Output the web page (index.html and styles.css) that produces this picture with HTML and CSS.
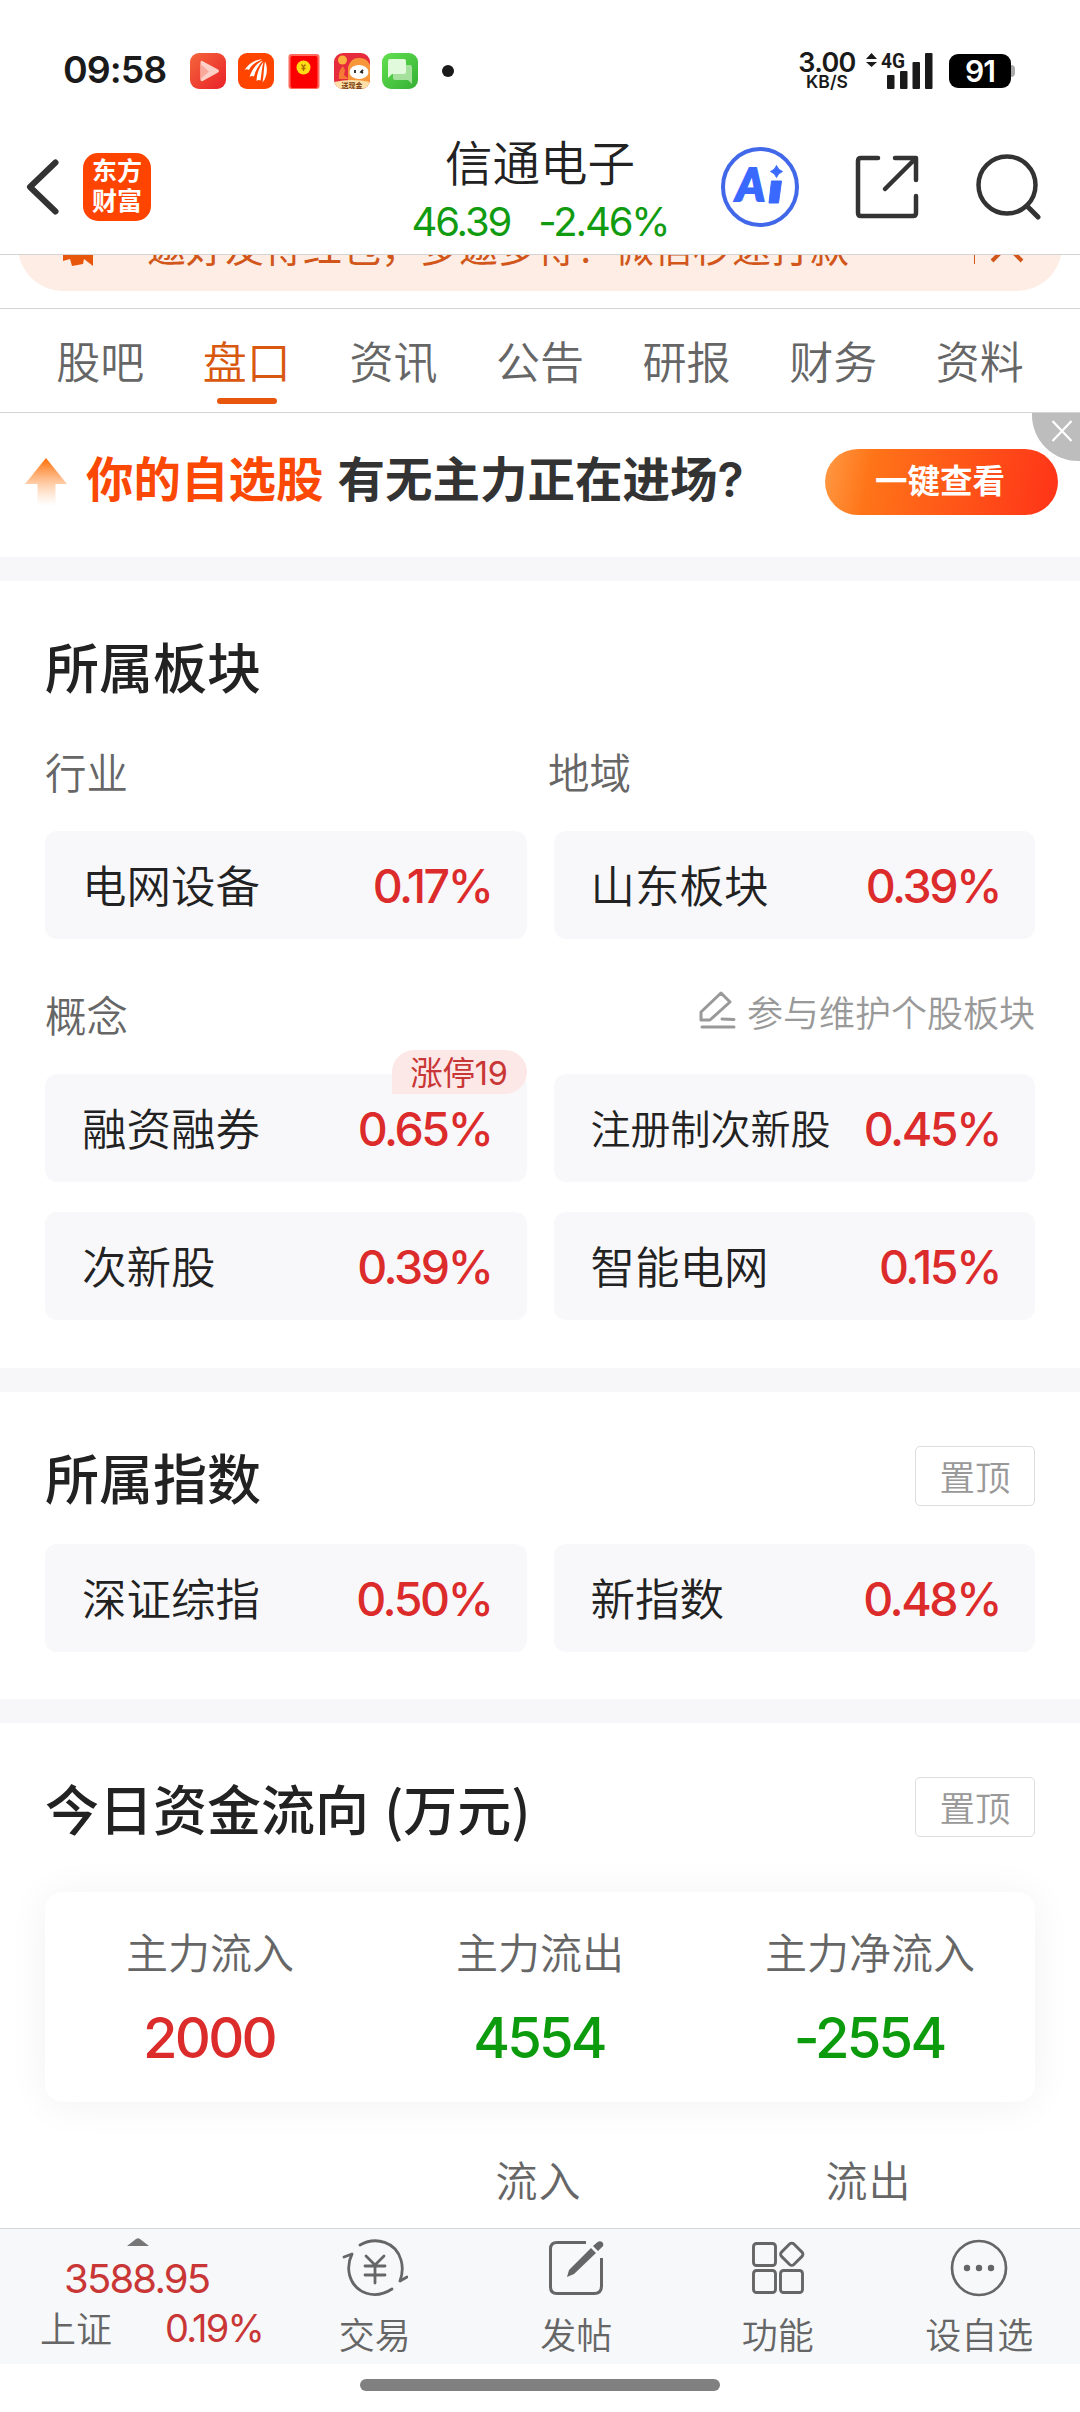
FILE: index.html
```html
<!DOCTYPE html>
<html lang="zh-CN">
<head>
    <meta charset="UTF-8">
    <meta name="viewport" content="width=device-width, initial-scale=1.0">
    <title>信通电子</title>
    <link rel="stylesheet" href="styles.css">
</head>
<body>
<div class="page">
    <!-- Status bar -->
    <div class="status-bar">
        <span class="time">09:58</span>
        <div class="app-icons">
            <svg width="36" height="36" viewBox="0 0 36 36">
                <defs>
                    <linearGradient id="gPlay" x1="0" y1="0" x2="1" y2="1"><stop offset="0" stop-color="#f4673a"/><stop offset="1" stop-color="#e9202a"/></linearGradient>
                </defs>
                <rect width="36" height="36" rx="9" fill="url(#gPlay)"/>
                <path d="M10.500 9.500Q10.500 7 12.700 8.200L28 16.500Q30 18 28 19.500L12.700 28Q10.500 29 10.500 26.500Z" fill="#ffd0c8"/>
                <path d="M10.500 11V26L19 18.500Z" fill="#f9a99c"/>
            </svg>
            <svg width="36" height="36" viewBox="0 0 36 36">
                <rect width="36" height="36" rx="9" fill="#ff4400"/>
                <path d="M6.500 17C11 10 17 6.500 24 6.500C18 9 13 12 11 17Q9 15.500 6.500 17ZM11.500 24C13.500 17 18 10.500 25 7.500C20.500 12 17.500 17.500 16 23.500Q13.500 22.500 11.500 24ZM18.500 28C19 20 21.500 13.500 25.500 9C24 14 23.500 21 22.500 27.500Q20.500 26.500 18.500 28ZM24.500 29.500C26 22 25.500 15 27 8.500C30 14 29.500 24 24.500 29.500Z" fill="#fff"/>
            </svg>
            <svg width="36" height="36" viewBox="0 0 36 36">
                <rect x="2.500" y="1" width="31" height="35" rx="3" fill="#ff6a5c"/>
                <rect x="4.500" y="3" width="27" height="32" rx="2" fill="#fb0000"/>
                <circle cx="17.500" cy="14.500" r="7" fill="#ffdc14"/>
                <path d="M15.500 11.500L17.500 14L19.500 11.500M17.500 14V18M15.500 15.500H19.500" stroke="#a86a00" stroke-width="1.300" fill="none"/>
            </svg>
            <svg width="36" height="36" viewBox="0 0 36 36">
                <defs><clipPath id="cFox"><rect width="36" height="36" rx="9"/></clipPath></defs>
                <g clip-path="url(#cFox)">
                    <rect width="36" height="36" fill="#e62b3c"/>
                    <path d="M14 36V14Q17 4 26 5Q33 5 36 12V36Z" fill="#f8973a"/>
                    <circle cx="8.500" cy="7" r="4.500" fill="#fbb040"/>
                    <path d="M5 26Q4 18 9 13L11 17L10 22L15 26Z" fill="#f47a35"/>
                    <ellipse cx="25" cy="19" rx="9.500" ry="7" fill="#fff"/>
                    <path d="M21 17V20M29 17L27 19L29 20" stroke="#222" stroke-width="1.800" fill="none"/>
                    <path d="M0 29Q18 25 36 29V36H0Z" fill="#fde0a8"/>
                </g>
                <text x="18" y="34.500" text-anchor="middle" class="fox-text">送现金</text>
            </svg>
            <svg width="36" height="36" viewBox="0 0 36 36">
                <defs>
                    <linearGradient id="gMsg" x1="0" y1="0" x2="1" y2="1"><stop offset="0" stop-color="#62e04f"/><stop offset="1" stop-color="#35b035"/></linearGradient>
                </defs>
                <rect width="36" height="36" rx="9" fill="url(#gMsg)"/>
                <path d="M13 12H28Q30 12 30 14V31L26 27H13Q11 27 11 25V14Q11 12 13 12Z" fill="#a5e09d"/>
                <path d="M8 6H22Q24 6 24 8V19Q24 21 22 21H10L6 25V8Q6 6 8 6Z" fill="#e0fadb"/>
            </svg>
        </div>
        <span class="more-dot"></span>
        <div class="net-speed"><b>3.00</b><span>KB/S</span></div>
        <svg class="signal" width="68" height="38" viewBox="0 0 68 38">
            <path d="M0 7L5.500 1L11 7ZM0 10H11L5.500 15Z" fill="#1a1a1a"/>
            <text x="15" y="16" class="signal-text" textLength="24" lengthAdjust="spacingAndGlyphs">4G</text>
            <g fill="#1a1a1a">
                <rect x="21" y="23" width="7.500" height="14" rx="1"/>
                <rect x="34" y="19" width="7.500" height="18" rx="1"/>
                <rect x="46.500" y="10" width="7.500" height="27" rx="1"/>
                <rect x="59" y="1" width="7.500" height="36" rx="1"/>
            </g>
        </svg>
        <span class="battery">91</span><span class="battery-tip"></span>
    </div>

    <!-- Header -->
    <div class="header">
        <div class="header-left">
            <svg width="36" height="60" viewBox="0 0 36 60"><path d="M30.500 5.500L5 30L30.500 54.500" fill="none" stroke="#333" stroke-width="6" stroke-linecap="round" stroke-linejoin="round"/></svg>
            <div class="logo">东方<br>财富</div>
        </div>
        <div class="stock">
            <div class="stock-name">信通电子</div>
            <div class="stock-price"><span>46.39</span><span>-2.46%</span></div>
        </div>
        <div class="header-right">
            <svg width="78" height="80" viewBox="0 0 78 80">
                <ellipse cx="39" cy="40" rx="37" ry="38" fill="none" stroke="#4068e8" stroke-width="4"/>
                <text x="15" y="54" class="ai-text" textLength="29" lengthAdjust="spacingAndGlyphs">A</text>
                <path d="M50.500 34H60.500L57.500 56H48Z" fill="#3a69ff" stroke="#3a69ff" stroke-linejoin="round"/>
                <path d="M55.500 18.500Q57 23 61.500 24.500Q57 26 55.500 30.500Q54 26 49.500 24.500Q54 23 55.500 18.500Z" fill="#3a69ff" stroke="#3a69ff"/>
            </svg>
            <svg width="64" height="64" viewBox="0 0 64 64"><path d="M23 3H6Q3 3 3 6V58Q3 61 6 61H58Q61 61 61 58V41M40 3H61V25M60 4L30 34" fill="none" stroke="#333" stroke-width="4.500" stroke-linecap="round" stroke-linejoin="round"/></svg>
            <svg width="66" height="68" viewBox="0 0 66 68"><circle cx="32" cy="32" r="28.500" fill="none" stroke="#333" stroke-width="4.500"/><path d="M52 53L63 64" stroke="#333" stroke-width="5" stroke-linecap="round"/></svg>
        </div>
    </div>

    <!-- Notice strip, half scrolled under the header -->
    <div class="notice-wrap">
        <div class="notice">
            <svg width="32" height="40" viewBox="0 0 32 40"><path d="M1 12L31 2V40L22 33L21 38L10 40L8 33L1 35Z" fill="#e8560b"/></svg>
            <span class="notice-text">邀好友得红包，多邀多得！微信秒速打款</span>
            <span class="notice-line"></span>
            <svg width="34" height="34" viewBox="0 0 34 34"><path d="M2 2L32 32M32 2L2 32" stroke="#d2561a" stroke-width="4"/></svg>
        </div>
    </div>

    <!-- Tabs -->
    <div class="tabs">
        <div class="tab">股吧</div>
        <div class="tab active">盘口</div>
        <div class="tab">资讯</div>
        <div class="tab">公告</div>
        <div class="tab">研报</div>
        <div class="tab">财务</div>
        <div class="tab">资料</div>
    </div>

    <!-- Ad -->
    <div class="ad">
        <svg width="42" height="48" viewBox="0 0 42 48">
            <defs><linearGradient id="gUp" x1="0" y1="0" x2="0" y2="1"><stop offset="0" stop-color="#ff6a00"/><stop offset="1" stop-color="#ffb57a" stop-opacity="0"/></linearGradient></defs>
            <path d="M21 0L42 26H30.500V48H12.500V26H0Z" fill="url(#gUp)"/>
        </svg>
        <span class="ad-hot">你的自选股</span>
        <span class="ad-text">有无主力正在进场<b>?</b></span>
        <button class="ad-btn">一键查看</button>
        <div class="ad-close">
            <svg width="22" height="22" viewBox="0 0 22 22"><path d="M1.500 1L20.500 21M20.500 1L1.500 21" stroke="#fff" stroke-width="2.200"/></svg>
        </div>
    </div>

    <!-- Sectors -->
    <div class="section sectors">
        <h2>所属板块</h2>
        <div class="labels"><span>行业</span><span>地域</span></div>
        <div class="grid">
            <div class="card"><span>电网设备</span><b>0.17%</b></div>
            <div class="card"><span>山东板块</span><b>0.39%</b></div>
        </div>
        <div class="labels concept">
            <span>概念</span>
            <div class="maintain">
                <svg width="37" height="38" viewBox="0 0 37 38"><path d="M22 2L31 11L11 29H2V21ZM23 28L35 28.500M3 36H35" fill="none" stroke="#999" stroke-width="3" stroke-linecap="round" stroke-linejoin="round"/></svg>
                <span>参与维护个股板块</span>
            </div>
        </div>
        <div class="grid">
            <div class="card"><span>融资融券</span><b>0.65%</b><em class="tag">涨停19</em></div>
            <div class="card"><span class="long">注册制次新股</span><b>0.45%</b></div>
            <div class="card"><span>次新股</span><b>0.39%</b></div>
            <div class="card"><span>智能电网</span><b>0.15%</b></div>
        </div>
    </div>

    <!-- Indexes -->
    <div class="section indexes">
        <div class="title-row"><h2>所属指数</h2><button class="pin">置顶</button></div>
        <div class="grid">
            <div class="card"><span>深证综指</span><b>0.50%</b></div>
            <div class="card"><span>新指数</span><b>0.48%</b></div>
        </div>
    </div>

    <!-- Fund flow -->
    <div class="section flow">
        <div class="title-row"><h2>今日资金流向 (万元)</h2><button class="pin">置顶</button></div>
        <div class="flow-card">
            <div><span>主力流入</span><b class="up">2000</b></div>
            <div><span>主力流出</span><b class="down">4554</b></div>
            <div><span>主力净流入</span><b class="down">-2554</b></div>
        </div>
        <div class="flow-head"><span></span><span>流入</span><span>流出</span></div>
    </div>

    <!-- Bottom bar -->
    <div class="bottom-bar">
        <div class="index-box">
            <svg width="22" height="8" viewBox="0 0 22 8"><path d="M0 8L9 1Q11 -0.500 13 1L22 8Z" fill="#777"/></svg>
            <div class="index-value">3588.95</div>
            <div class="index-row"><span>上证</span><b>0.19%</b></div>
        </div>
        <div class="nav-item">
            <svg width="66" height="62" viewBox="0 0 66 62">
                <g fill="none" stroke="#666" stroke-width="2.800" stroke-linecap="round" stroke-linejoin="round">
                    <path d="M18 7C34 -2 54 4 59 22Q62 32 58 43L65 39"/>
                    <path d="M50 51C33 62 13 56 7.500 37Q5 26 10 16L2 19"/>
                    <path d="M24 18L33 27L42 18M23 28H43M23 37H43M33 27V45"/>
                </g>
            </svg>
            <span>交易</span>
        </div>
        <div class="nav-item">
            <svg width="66" height="62" viewBox="0 0 66 62">
                <path d="M43 4.500H14Q7.500 4.500 7.500 11V49Q7.500 55.500 14 55.500H51Q58.500 55.500 58.500 48V20" fill="none" stroke="#666" stroke-width="3"/>
                <path d="M24 39L26 32L48 10L53 15L31 36ZM50 8L54 4.500Q58 2 60 5Q61 8 58.500 9.500L55 13Z" fill="#666"/>
            </svg>
            <span>发帖</span>
        </div>
        <div class="nav-item">
            <svg width="66" height="62" viewBox="0 0 66 62">
                <g fill="none" stroke="#666" stroke-width="2.900">
                    <rect x="8.500" y="5.500" width="22" height="22" rx="3"/>
                    <rect x="8.500" y="32.500" width="22" height="22" rx="3"/>
                    <rect x="35.500" y="32.500" width="22" height="22" rx="3"/>
                    <rect x="38" y="7.500" width="17.500" height="17.500" rx="3" transform="rotate(45 46.750 16.250)"/>
                </g>
            </svg>
            <span>功能</span>
        </div>
        <div class="nav-item">
            <svg width="66" height="62" viewBox="0 0 66 62">
                <circle cx="33" cy="30" r="27" fill="none" stroke="#666" stroke-width="2.700"/>
                <g fill="#666"><circle cx="21" cy="30" r="3.200"/><circle cx="33" cy="30" r="3.200"/><circle cx="45" cy="30" r="3.200"/></g>
            </svg>
            <span>设自选</span>
        </div>
    </div>
    <div class="home-bar"><span></span></div>
</div>
</body>
</html>
```

FILE: styles.css
```css
/* Global Styles */
* {
    box-sizing: border-box;
}

body {
    margin: 0;
    background-color: #fff;
    color: #222;
    font-family: "Noto Sans CJK SC", sans-serif;
}

svg {
    display: block;
    flex: none;
}

h2 {
    margin: 0;
    font-size: 54px;
    line-height: 60px;
    font-weight: 500;
    word-spacing: 3px;
}

b,
em {
    font-style: normal;
    font-weight: normal;
}

button {
    padding: 0;
    border: none;
    background: none;
    font-family: inherit;
}

.page {
    width: 1080px;
    height: 2412px;
    overflow: hidden;
    display: flex;
    flex-direction: column;
}

/* Status Bar */
.status-bar {
    height: 118px;
    padding: 24px 65px 0 63px;
    display: flex;
    align-items: center;
    flex: none;
    color: #1a1a1a;
}

.time {
    width: 127px;
    padding-bottom: 2px;
    font: 600 37.5px/44px Inter, sans-serif;
    letter-spacing: -1px;
}

.app-icons {
    display: flex;
    gap: 12px;
}

.fox-text {
    font-size: 7px;
    font-weight: 700;
    fill: #7a3a10;
}

.more-dot {
    width: 12px;
    height: 12px;
    margin-left: 24px;
    border-radius: 50%;
    background-color: #1a1a1a;
}

.net-speed {
    width: 60px;
    margin-left: auto;
    display: flex;
    flex-direction: column;
    align-items: center;
    font-family: Inter, sans-serif;
}

.net-speed b {
    font-size: 27px;
    line-height: 21px;
    font-weight: 600;
    letter-spacing: -0.7px;
}

.net-speed span {
    font-size: 17.5px;
    line-height: 18px;
    font-weight: 600;
}

.signal {
    margin-left: 9px;
}

.signal-text {
    font: 700 21px Roboto, sans-serif;
    fill: #1a1a1a;
}

.battery {
    width: 62px;
    height: 34px;
    margin-left: 15px;
    border-radius: 9px;
    background-color: #000;
    color: #fff;
    text-align: center;
    letter-spacing: -1px;
    font: 600 30px/35px Inter, sans-serif;
}

.battery-tip {
    width: 4px;
    height: 12px;
    border-radius: 0 4px 4px 0;
    background-color: #aaa;
}

/* Header */
.header {
    height: 137px;
    padding: 0 39px 0 25px;
    border-bottom: 1px solid #d4d4d4;
    display: grid;
    grid-template-columns: 345px 340px 1fr;
    flex: none;
}

.header-left {
    padding-top: 35px;
    display: flex;
    align-items: center;
    align-self: start;
    gap: 22px;
}

.logo {
    width: 68px;
    height: 68px;
    padding-top: 2px;
    border-radius: 15px;
    background-color: #ff4400;
    color: #fff;
    text-align: center;
    font-size: 25px;
    line-height: 29.5px;
    font-weight: 700;
}

.stock {
    text-align: center;
}

.stock-name {
    padding-top: 13px;
    font-size: 47.5px;
    line-height: 60px;
    font-weight: 350;
}

.stock-price {
    padding-top: 2px;
    display: flex;
    justify-content: center;
    gap: 28px;
    color: #119b11;
    letter-spacing: -2.1px;
    font: 400 40px/58px Inter, sans-serif;
}

.header-right {
    padding-top: 29px;
    display: flex;
    align-items: center;
    align-self: start;
    justify-content: flex-end;
    gap: 56px;
}

.ai-text {
    font: italic 900 45px Lato, sans-serif;
    fill: #3a69ff;
    stroke: #3a69ff;
    stroke-width: 2px;
}

/* Notice */
.notice-wrap {
    height: 54px;
    padding: 0 18px;
    border-bottom: 1px solid #d4d4d4;
    overflow: hidden;
    display: flex;
    align-items: flex-end;
    flex: none;
}

.notice {
    flex: 1;
    height: 90px;
    margin-bottom: 17px;
    padding: 0 38px 0 44px;
    border-radius: 45px;
    background-color: #fdede4;
    color: #d2561a;
    display: flex;
    align-items: center;
}

.notice-text {
    margin-left: 53px;
    margin-top: -2px;
    font-size: 39px;
    line-height: 60px;
    white-space: nowrap;
}

.notice-line {
    width: 1px;
    height: 36px;
    margin-left: auto;
    margin-right: 15px;
    background-color: #d2561a;
}

/* Tabs */
.tabs {
    height: 104px;
    padding: 0 27px;
    border-bottom: 1px solid #d4d4d4;
    display: flex;
    flex: none;
}

.tab {
    flex: 1;
    padding-top: 19px;
    display: flex;
    flex-direction: column;
    align-items: center;
    color: #666;
    font-size: 44px;
    line-height: 64px;
    font-weight: 350;
}

.tab.active {
    color: #d9580f;
}

.tab.active::after {
    content: "";
    width: 60px;
    height: 6px;
    margin-top: 6px;
    border-radius: 3px;
    background-color: #e8560b;
}

/* Ad */
.ad {
    height: 144px;
    padding: 0 22px 7px 25px;
    position: relative;
    display: flex;
    align-items: center;
    flex: none;
    font-size: 47.5px;
    font-weight: 700;
    white-space: nowrap;
}

.ad-hot {
    margin-left: 19px;
    padding-bottom: 10px;
    color: #fb4804;
}

.ad-text {
    margin-left: 14px;
    padding-bottom: 10px;
    color: #333;
}

.ad-text b {
    font: 600 48px/48px Inter, sans-serif;
}

.ad-btn {
    width: 233px;
    height: 66px;
    margin: 0 0 0 auto;
    padding: 0 3px 5px 0;
    border-radius: 33px;
    background: linear-gradient(100deg, #ff9a44 0%, #ff7418 20%, #ff3318 100%);
    color: #fff;
    font-size: 32.5px;
    font-weight: 700;
    line-height: 60px;
}

.ad-close {
    width: 48px;
    height: 48px;
    position: absolute;
    top: 0;
    right: 0;
    padding: 7px 0 0 19px;
    border-bottom-left-radius: 46px;
    background-color: #bdbdbd;
}

/* Sections */
.section {
    padding: 0 45px;
    border-top: 24px solid #f7f7fa;
    flex: none;
}

.sectors {
    height: 811px;
    padding-top: 55px;
}

.indexes {
    height: 331px;
    padding-top: 54px;
}

.flow {
    height: 529px;
    padding-top: 54px;
}

.labels {
    margin-top: 43px;
    display: grid;
    grid-template-columns: 503px 1fr;
    color: #666;
    font-size: 41.5px;
    line-height: 64px;
    font-weight: 350;
}

.labels.concept {
    margin-top: 43px;
}

.maintain {
    margin-top: -4px;
    height: 64px;
    display: flex;
    align-items: center;
    justify-content: flex-end;
    gap: 11px;
    color: #999;
    font-size: 36px;
}

.maintain svg {
    margin-bottom: 1px;
}

.maintain span {
    padding-top: 2px;
}

.grid {
    margin-top: 28px;
    display: grid;
    grid-template-columns: 1fr 1fr;
    gap: 30px 27px;
}

.card {
    height: 108px;
    padding: 0 35px 0 37px;
    position: relative;
    border-radius: 12px;
    background-color: #f8f8fb;
    display: flex;
    align-items: center;
    justify-content: space-between;
    font-size: 44.5px;
    font-weight: 350;
    white-space: nowrap;
}

.card span {
    padding-bottom: 4px;
}

.card .long {
    padding-bottom: 2px;
    font-size: 40px;
}

.card b {
    padding-top: 2px;
    color: #dc2b2b;
    letter-spacing: -2.4px;
    font: 500 46.5px/60px Inter, sans-serif;
}

.tag {
    width: 135px;
    height: 44px;
    position: absolute;
    top: -24px;
    right: 0;
    border-radius: 22px 22px 22px 0;
    background-color: #fde8e8;
    color: #c93636;
    text-align: center;
    letter-spacing: -0.2px;
    font: 400 32.5px/48px Inter, "Noto Sans CJK SC", sans-serif;
}

.title-row {
    height: 60px;
    display: flex;
    align-items: center;
    justify-content: space-between;
}

.title-row h2 {
    padding-top: 2px;
}

.indexes .grid {
    margin-top: 38px;
}

.pin {
    width: 120px;
    height: 60px;
    border: 1px solid #ddd;
    border-radius: 5px;
    color: #999;
    font-size: 35.5px;
    font-weight: 350;
    line-height: 54px;
}

/* Fund Flow */
.flow-card,
.flow-head {
    display: grid;
    grid-template-columns: repeat(3, 1fr);
    text-align: center;
    color: #666;
    font-size: 42px;
    line-height: 60px;
    font-weight: 350;
}

.flow-card {
    height: 210px;
    margin-top: 55px;
    padding-top: 29px;
    border-radius: 18px;
    background-color: #fff;
    box-shadow: 0 2px 40px rgba(0, 0, 0, 0.06);
}

.flow-card span,
.flow-card b {
    display: block;
}

.flow-card b {
    margin-top: 22px;
    padding-right: 2px;
    letter-spacing: -2.8px;
    font: 500 56px/70px Inter, sans-serif;
}

.flow-head {
    margin-top: 47px;
    letter-spacing: 1px;
}

.flow-head span {
    padding-right: 3px;
}

.up {
    color: #dc2b2b;
}

.down {
    color: #0c9b0c;
}

/* Bottom Bar */
.bottom-bar {
    height: 136px;
    border-top: 1px solid #d4d6d9;
    background-color: #f7f8fa;
    display: grid;
    grid-template-columns: 274px repeat(4, 1fr);
    flex: none;
    color: #666;
    font-size: 36px;
    font-weight: 350;
}

.index-box {
    padding: 9px 11px 0 40px;
    color: #c93636;
}

.index-box svg {
    margin-left: 87px;
}

.index-value {
    margin-left: 24px;
    margin-top: 8px;
    letter-spacing: -1.8px;
    font: 400 40px/50px Inter, sans-serif;
}

.index-row {
    height: 50px;
    display: flex;
    justify-content: space-between;
    align-items: center;
    line-height: 50px;
}

.index-row span {
    padding-bottom: 5px;
    color: #666;
}

.index-row b {
    padding-bottom: 2px;
    letter-spacing: -1.8px;
    font: 400 38px/50px Inter, sans-serif;
}

.nav-item {
    padding-top: 9px;
    display: flex;
    flex-direction: column;
    align-items: center;
}

.nav-item span {
    margin-top: 6px;
    line-height: 54px;
}

.home-bar {
    height: 48px;
    padding-top: 15px;
    flex: none;
}

.home-bar span {
    display: block;
    width: 360px;
    height: 12px;
    margin: 0 auto;
    border-radius: 6px;
    background-color: #808080;
}
```
